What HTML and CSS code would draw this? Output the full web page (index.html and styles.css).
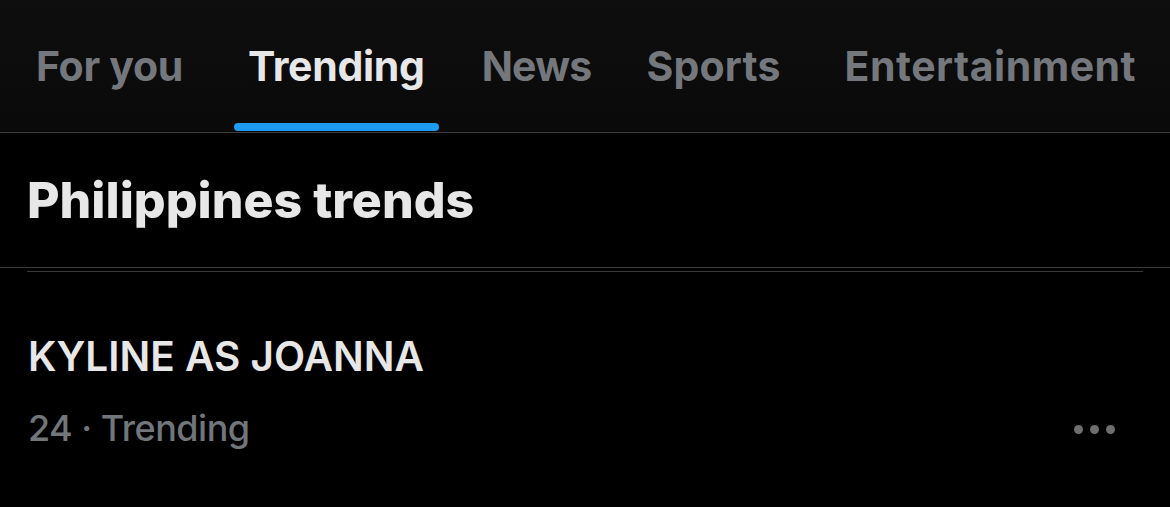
FILE: index.html
```html
<!DOCTYPE html>
<html>
<head>
<meta charset="utf-8">
<link rel="stylesheet" href="styles.css">
</head>
<body>
<div class="page">
  <nav class="tabs">
    <div class="tab tab-foryou">For you</div>
    <div class="tab tab-trending active">Trending<span class="indicator"></span></div>
    <div class="tab tab-news">News</div>
    <div class="tab tab-sports">Sports</div>
    <div class="tab tab-ent">Entertainment</div>
  </nav>
  <section class="section-head">
    <h1 class="title">Philippines trends</h1>
  </section>
  <div class="rule-full"></div>
  <div class="rule-inset"></div>
  <article class="trend">
    <div class="trend-name">KYLINE AS JOANNA</div>
    <div class="trend-meta">
      <span class="meta-text">24 · Trending</span>
      <span class="more"><i></i><i></i><i></i></span>
    </div>
  </article>
</div>
</body>
</html>
```
FILE: styles.css
```css
* { box-sizing: border-box; margin: 0; padding: 0; }
html, body { background: #000; }
body { width: 1170px; height: 507px; overflow: hidden; font-family: Inter, "Liberation Sans", sans-serif; }
.page { display: flex; flex-direction: column; }
.tabs {
  display: flex;
  align-items: flex-end;
  height: 133px;
  background: linear-gradient(#0e0e0e, #0a0a0a);
  border-bottom: 1px solid #3a3b3c;
  padding-left: 36px;
}
.tab {
  position: relative;
  font-size: 41px;
  font-weight: 700;
  color: #74787d;
  height: 100%;
  display: flex;
  align-items: center;
  letter-spacing: -0.3px;
}
.tab-trending { margin-left: 65px; }
.tab-news { margin-left: 57px; letter-spacing: -0.8px; }
.tab-sports { margin-left: 55px; letter-spacing: 0.2px; }
.tab-ent { margin-left: 64px; letter-spacing: 0.5px; }
.tab.active { color: #e7e7e7; }
.indicator {
  position: absolute;
  left: -14px;
  right: -14px;
  bottom: 1px;
  height: 8px;
  border-radius: 4px;
  background: #1d9bf0;
}
.section-head { height: 134px; display: flex; align-items: center; padding-left: 27px; }
.title { font-size: 50px; font-weight: 800; color: #e7e7e7; letter-spacing: 0; }
.rule-full { height: 1px; background: #3a3a3a; }
.rule-inset { height: 1px; background: #3a3a3a; margin: 3px 27px 0 27px; }
.trend { padding: 60px 0 0 28px; }
.trend-name { font-size: 40.5px; font-weight: 600; color: #e7e7e7; line-height: 50px; }
.trend-meta { display: flex; align-items: center; justify-content: space-between; margin-top: 24px; padding-right: 55px; }
.meta-text { font-size: 36px; font-weight: 500; color: #71767b; letter-spacing: -0.5px; }
.more { display: flex; gap: 7px; padding-top: 2px; }
.more i { width: 9px; height: 9px; border-radius: 50%; background: #6e6e6e; }
```
